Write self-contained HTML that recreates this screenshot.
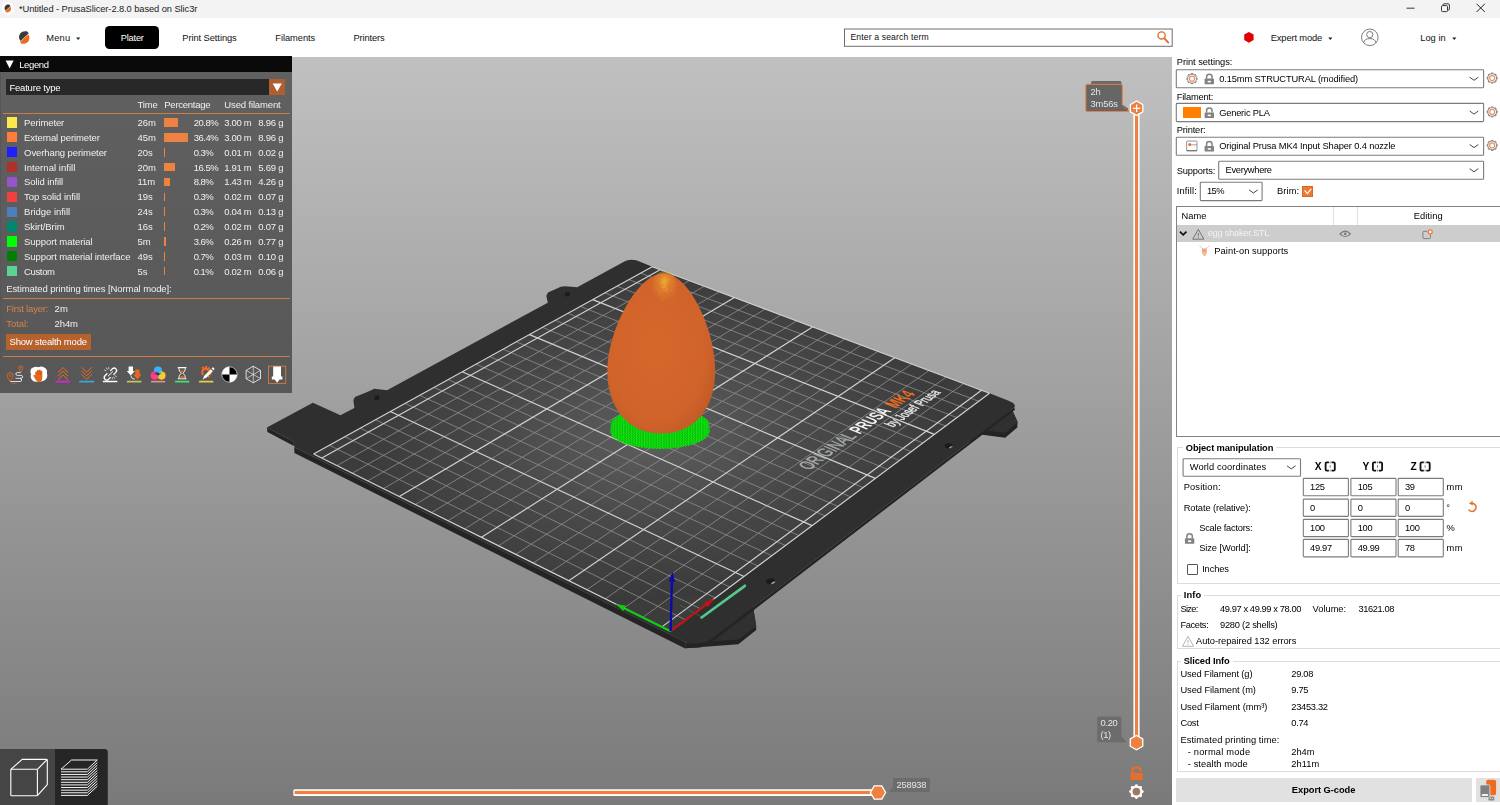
<!DOCTYPE html>
<html><head><meta charset="utf-8"><title>PrusaSlicer</title><style>
html,body{margin:0;padding:0;}
body{width:1500px;height:805px;overflow:hidden;position:relative;background:#fff;font-family:"Liberation Sans",sans-serif;}
.b{position:absolute;box-sizing:border-box;}
.t{position:absolute;white-space:pre;}
svg{position:absolute;left:0;top:0;overflow:visible;}
#legend,#overlay,#scene{position:absolute;left:0;top:0;width:1500px;height:805px;will-change:transform;}
</style></head><body>
<div id="top"><div class="b" style="left:0px;top:0px;width:1500px;height:17.5px;background:#f3f3f3;"></div><div class="b" style="left:0px;top:17.5px;width:1500px;height:39px;background:#fff;"></div><svg width="1500" height="57" viewBox="0 0 1500 57"><circle cx="7.8" cy="8.5" r="6.4" fill="#fff"/><g transform="translate(7.8,8.5) scale(0.62)"><path d="M-4.9,1.6 C-6.2,-3.4 -2.6,-7 2.6,-6.2 L4.6,-4.2 L-3.6,3.4 Z" fill="#3a3a3a"/><path d="M4.9,-1.6 C6.2,3.4 2.6,7 -2.6,6.2 L-4.2,4.6 L4.0,-3.0 Z" fill="#ed6b21"/></g><g transform="translate(24.2,37.5) scale(1.0)"><path d="M-4.9,1.6 C-6.2,-3.4 -2.6,-7 2.6,-6.2 L4.6,-4.2 L-3.6,3.4 Z" fill="#3a3a3a"/><path d="M4.9,-1.6 C6.2,3.4 2.6,7 -2.6,6.2 L-4.2,4.6 L4.0,-3.0 Z" fill="#ed6b21"/></g><path d="M76.10000000000001,37.4 L80.3,37.4 L78.2,39.9 Z" fill="#222"/><path d="M1328.2,37.4 L1332.3999999999999,37.4 L1330.3,39.9 Z" fill="#222"/><path d="M1452.2,37.4 L1456.3999999999999,37.4 L1454.3,39.9 Z" fill="#222"/><path d="M1406.5,8.2 H1414.5" stroke="#222" stroke-width="0.9" fill="none"/><rect x="1441.5" y="5.6" width="6" height="6" rx="1" fill="none" stroke="#222" stroke-width="0.9"/><path d="M1443.2,5.4 V4.6 Q1443.2,3.8 1444,3.8 H1448.2 Q1449.4,3.8 1449.4,5 V9.2 Q1449.4,10 1448.6,10 H1447.8" fill="none" stroke="#222" stroke-width="0.9"/><path d="M1476.6,3.8 L1484.8,12 M1484.8,3.8 L1476.6,12" stroke="#222" stroke-width="1" fill="none"/><rect x="844.5" y="29" width="327.7" height="17.3" fill="#fff" stroke="#6e6e6e" stroke-width="1"/><circle cx="1161.6" cy="35.4" r="3.6" fill="none" stroke="#e0692a" stroke-width="1.3"/><path d="M1164.2,38.2 L1168.3,42.6" stroke="#e0692a" stroke-width="1.8" stroke-linecap="round"/><polygon points="1253.58,40.00 1248.90,42.70 1244.22,40.00 1244.22,34.60 1248.90,31.90 1253.58,34.60" fill="#e00000"/><circle cx="1369.8" cy="37.3" r="8.3" fill="none" stroke="#6e6e6e" stroke-width="0.9"/><circle cx="1369.8" cy="34.6" r="3.1" fill="none" stroke="#6e6e6e" stroke-width="0.9"/><path d="M1363.6,42.8 Q1364.4,38.6 1369.8,38.6 Q1375.2,38.6 1376,42.8" fill="none" stroke="#6e6e6e" stroke-width="0.9"/></svg><div class="b" style="left:105px;top:26px;width:54.3px;height:23.3px;background:#000;border-radius:4.5px;"></div><span class="t" style='left:19.00px;top:3.16px;font-size:9.3px;line-height:12.09px;color:#222;letter-spacing:-0.069px;'>*Untitled - PrusaSlicer-2.8.0 based on Slic3r</span><span class="t" style='left:46.30px;top:32.05px;font-size:9.3px;line-height:12.09px;color:#111;letter-spacing:0.184px;'>Menu</span><span class="t" style='left:120.80px;top:32.05px;font-size:9.3px;line-height:12.09px;color:#fff;letter-spacing:-0.233px;'>Plater</span><span class="t" style='left:182.30px;top:32.05px;font-size:9.3px;line-height:12.09px;color:#111;letter-spacing:-0.064px;'>Print Settings</span><span class="t" style='left:275.30px;top:32.05px;font-size:9.3px;line-height:12.09px;color:#111;letter-spacing:-0.046px;'>Filaments</span><span class="t" style='left:353.50px;top:32.05px;font-size:9.3px;line-height:12.09px;color:#111;letter-spacing:-0.116px;'>Printers</span><span class="t" style='left:850.40px;top:32.38px;font-size:8.649000000000001px;line-height:11.24px;color:#111;letter-spacing:0.139px;'>Enter a search term</span><span class="t" style='left:1270.80px;top:32.05px;font-size:9.3px;line-height:12.09px;color:#111;letter-spacing:-0.138px;'>Expert mode</span><span class="t" style='left:1420.20px;top:32.05px;font-size:9.3px;line-height:12.09px;color:#111;letter-spacing:0.043px;'>Log in</span></div>
<div id="scene"><div class="b" style="left:0px;top:56.5px;width:1171.5px;height:748.5px;background:linear-gradient(#c0c0c0,#7a7a7a);"></div><svg width="1500" height="805" viewBox="0 0 1500 805"><defs><radialGradient id="bedg" cx="0.5" cy="0.5" r="0.5"><stop offset="0" stop-color="#5e5e5e"/><stop offset="0.55" stop-color="#484848"/><stop offset="1" stop-color="#3a3a3a"/></radialGradient><radialGradient id="eggg" cx="0.45" cy="0.45" r="0.65"><stop offset="0" stop-color="#d7682c"/><stop offset="0.72" stop-color="#d0632a"/><stop offset="1" stop-color="#bd5926"/></radialGradient><radialGradient id="eggtop" cx="0.5" cy="0.3" r="0.6"><stop offset="0" stop-color="#f2c030" stop-opacity="0.85"/><stop offset="0.35" stop-color="#eea030" stop-opacity="0.45"/><stop offset="1" stop-color="#e88a30" stop-opacity="0"/></radialGradient><pattern id="supp" width="2.6" height="2.6" patternUnits="userSpaceOnUse"><rect width="2.6" height="2.6" fill="#0ee60e"/><path d="M0.4,2.6 L1.5,0" stroke="#0a9a0a" stroke-width="0.75"/></pattern><clipPath id="gridclip"><polygon points="670.6,631.2 989.5,393.3 652.2,266.7 313.6,454.0"/></clipPath></defs><polygon points="1012,409.5 1017.6,422 1017.3,427.4 1005.2,437.8 980.6,434.4 970,442 966,441 972,432" fill="#232323"/><polygon points="1012,409.5 1017.6,422 1005.2,432.9 981.2,429.8 972,436.5" fill="#303030"/><polygon points="753.1,606.9 756.2,626 756.2,630 738.4,644.3 684.7,648.2 688,640 720,630" fill="#232323"/><polygon points="710.7,638.1 753.1,606.9 756.2,626 739.3,639.2 709.8,641.7" fill="#303030"/><polygon points="266.9,427.6 267.4,432 293.9,446 293.8,441.7" fill="#242424"/><polygon points="294.3,447.2 294.4,453 684.7,648.2 686,642.4" fill="#242424"/><polygon points="686,642.4 684.7,648.2 700,647.4 712,642 1015,409.8 1014.3,407.6 712,638.6 700,643.3" fill="#242424"/><polygon points="631.3,259.8 636,260.2 639.5,261.4 652.2,266.7 989.5,393.3 1008,400.6 1013.2,403 1015,405.4 1014.3,407.6 712,638.6 706.5,641.8 700,643.3 692,643.6 686,642.4 294.3,447.2 293.8,441.7 266.9,427.6 312.9,402.7 340.5,415.3 354.4,407.9 353.4,399.9 355,397 369,391.3 374.3,388.8 387.1,390.2 547.8,302.7 546.3,295.7 548,292.6 560.8,286.7 565,286.3 577.2,287.2 624.4,261.4 627.5,260.2" fill="#2f2f2f"/><rect x="565.0" y="292.2" width="4.6" height="4" fill="#1b1b1b" transform="skewX(-12)" transform-origin="567.2 294.2"/><rect x="374.6" y="395.8" width="4.6" height="4" fill="#1b1b1b" transform="skewX(-12)" transform-origin="376.8 397.8"/><ellipse cx="770.6" cy="581.3" rx="4.70" ry="2.70" fill="#1b1b1b" transform="rotate(-6 770.6 581.3)"/><ellipse cx="773.20" cy="582.75" rx="2.30" ry="0.85" fill="#a0a0a0" transform="rotate(-28 773.20 582.75)"/><ellipse cx="948.6" cy="445.9" rx="4.00" ry="2.29" fill="#1b1b1b" transform="rotate(-6 948.6 445.9)"/><ellipse cx="950.81" cy="447.13" rx="1.95" ry="0.72" fill="#a0a0a0" transform="rotate(-28 950.81 447.13)"/><polygon points="670.6,631.2 989.5,393.3 652.2,266.7 313.6,454.0" fill="#3c3c3c"/><g clip-path="url(#gridclip)"><ellipse cx="655" cy="435" rx="300" ry="165" fill="url(#bedg)" transform="rotate(-4 655 435)"/></g><path d="M685.7,619.9 L329.4,445.3 M700.6,608.8 L344.9,436.7 M715.3,597.8 L360.3,428.2 M729.8,587.0 L375.4,419.8 M758.0,566.0 L405.1,403.4 M771.9,555.7 L419.6,395.3 M785.5,545.5 L434.0,387.4 M798.9,535.5 L448.2,379.6 M825.1,515.9 L476.0,364.2 M838.0,506.4 L489.6,356.6 M850.6,496.9 L503.1,349.2 M863.1,487.6 L516.3,341.8 M887.5,469.4 L542.4,327.4 M899.5,460.5 L555.2,320.3 M911.3,451.7 L567.9,313.3 M922.9,443.0 L580.4,306.4 M945.7,426.0 L604.9,292.9 M956.9,417.6 L616.9,286.2 M967.9,409.4 L628.8,279.6 M978.8,401.3 L640.6,273.1 M642.8,617.4 L963.7,383.6 M624.0,608.1 L946.2,377.1 M605.4,598.8 L928.9,370.5 M587.0,589.7 L911.7,364.1 M550.9,571.8 L877.9,351.4 M533.2,563.0 L861.3,345.2 M515.8,554.3 L844.9,339.0 M498.5,545.8 L828.6,332.9 M464.6,529.0 L796.6,320.9 M448.0,520.7 L780.8,315.0 M431.6,512.6 L765.2,309.1 M415.3,504.5 L749.7,303.3 M383.4,488.7 L719.2,291.9 M367.8,480.9 L704.3,286.2 M352.3,473.2 L689.4,280.7 M337.0,465.6 L674.7,275.1" stroke="#8e8e8e" stroke-width="0.8" fill="none"/><path d="M670.6,631.2 L313.6,454.0 M989.5,393.3 L652.2,266.7 M670.6,631.2 L989.5,393.3 M313.6,454.0 L652.2,266.7 M744.0,576.4 L390.4,411.5 M812.1,525.6 L462.2,371.8 M875.4,478.4 L529.5,334.6 M934.4,434.4 L592.7,299.6 M661.9,626.9 L981.5,390.3 M568.8,580.7 L894.7,357.7 M481.5,537.3 L812.5,326.9 M399.3,496.5 L734.4,297.6 M321.8,458.1 L660.1,269.7" stroke="#d2d2d2" stroke-width="1.15" fill="none"/><path d="M701.6,617.5 L744.9,585.8" stroke="#55c98c" stroke-width="2.7" stroke-linecap="round"/><path d="M701,616.6 L679.8,605" stroke="#3f8a64" stroke-width="0.5"/><text stroke="#a4aaa6" stroke-width="0.3" transform="matrix(1.1996,-0.8569,1.7502,0.7236,809.18,470.56)" x="0" y="0" font-family="Liberation Sans, sans-serif" font-size="10.0" fill="#a4aaa6" textLength="40.1" lengthAdjust="spacingAndGlyphs">ORIGINAL</text><text transform="matrix(1.1427,-0.8162,1.7316,0.6894,859.74,434.45)" x="0" y="0" font-family="Liberation Sans, sans-serif" font-size="10.0" font-weight="bold" fill="#f4f4f4" textLength="28.4" lengthAdjust="spacingAndGlyphs">PRUSA</text><text transform="matrix(1.1036,-0.7883,1.7178,0.6660,895.58,408.85)" x="0" y="0" font-family="Liberation Sans, sans-serif" font-size="10.0" font-weight="bold" fill="#ef6a1e" textLength="18.8" lengthAdjust="spacingAndGlyphs">MK4</text><text stroke="#e6e6e6" stroke-width="0.35" transform="matrix(0.8518,-0.6167,1.3391,0.5210,893.08,427.44)" x="0" y="0" font-family="Liberation Sans, sans-serif" font-size="10.0" fill="#e6e6e6" textLength="56.4" lengthAdjust="spacingAndGlyphs">by Josef Prusa</text><g fill="url(#supp)"><ellipse cx="660" cy="424.5" rx="49.2" ry="16.5"/><rect x="610.8" y="424.5" width="98.4" height="6.5"/><ellipse cx="660" cy="431" rx="49.2" ry="17.4"/></g><ellipse cx="660" cy="431" rx="49.2" ry="17.4" fill="none" stroke="#10d810" stroke-width="1.2" stroke-dasharray="2.2 1.4"/><path d="M663.5,273.3 C689,273.3 715.2,330 715.2,371 C715.2,408 695,433.6 661.2,433.6 C628,433.6 607.3,408 607.3,371 C607.3,330 638,273.3 663.5,273.3 Z" fill="url(#eggg)"/><ellipse cx="664.5" cy="288" rx="13" ry="17" fill="url(#eggtop)"/><rect x="667.3" y="292.0" width="0.9" height="0.9" fill="#f0b030" opacity="0.52"/><rect x="671.4" y="291.3" width="0.9" height="0.9" fill="#f0b030" opacity="0.38"/><rect x="660.0" y="293.8" width="0.9" height="0.9" fill="#f0b030" opacity="0.43"/><rect x="663.1" y="285.9" width="0.9" height="0.9" fill="#f0b030" opacity="0.68"/><rect x="663.5" y="286.7" width="0.9" height="0.9" fill="#f0b030" opacity="0.70"/><rect x="665.9" y="287.4" width="0.9" height="0.9" fill="#f0b030" opacity="0.67"/><rect x="667.2" y="278.1" width="0.9" height="0.9" fill="#f0b030" opacity="0.48"/><rect x="664.9" y="289.7" width="0.9" height="0.9" fill="#f0b030" opacity="0.63"/><rect x="671.6" y="282.2" width="0.9" height="0.9" fill="#f0b030" opacity="0.39"/><rect x="658.9" y="292.7" width="0.9" height="0.9" fill="#f0b030" opacity="0.41"/><rect x="674.3" y="290.6" width="0.9" height="0.9" fill="#f0b030" opacity="0.26"/><rect x="662.2" y="300.2" width="0.9" height="0.9" fill="#f0b030" opacity="0.30"/><rect x="666.5" y="288.8" width="0.9" height="0.9" fill="#f0b030" opacity="0.62"/><rect x="666.3" y="279.5" width="0.9" height="0.9" fill="#f0b030" opacity="0.53"/><rect x="661.8" y="283.6" width="0.9" height="0.9" fill="#f0b030" opacity="0.60"/><rect x="659.2" y="294.5" width="0.9" height="0.9" fill="#f0b030" opacity="0.38"/><rect x="670.8" y="290.1" width="0.9" height="0.9" fill="#f0b030" opacity="0.42"/><rect x="664.9" y="288.2" width="0.9" height="0.9" fill="#f0b030" opacity="0.68"/><rect x="657.4" y="291.5" width="0.9" height="0.9" fill="#f0b030" opacity="0.37"/><rect x="660.5" y="282.3" width="0.9" height="0.9" fill="#f0b030" opacity="0.53"/><rect x="662.7" y="294.9" width="0.9" height="0.9" fill="#f0b030" opacity="0.46"/><rect x="661.0" y="283.3" width="0.9" height="0.9" fill="#f0b030" opacity="0.56"/><rect x="669.2" y="278.7" width="0.9" height="0.9" fill="#f0b030" opacity="0.43"/><rect x="662.5" y="298.7" width="0.9" height="0.9" fill="#f0b030" opacity="0.35"/><rect x="672.1" y="296.8" width="0.9" height="0.9" fill="#f0b030" opacity="0.26"/><rect x="664.8" y="277.2" width="0.9" height="0.9" fill="#f0b030" opacity="0.48"/><rect x="661.7" y="286.3" width="0.9" height="0.9" fill="#f0b030" opacity="0.62"/><rect x="664.0" y="284.5" width="0.9" height="0.9" fill="#f0b030" opacity="0.70"/><rect x="656.8" y="280.0" width="0.9" height="0.9" fill="#f0b030" opacity="0.34"/><rect x="660.8" y="299.6" width="0.9" height="0.9" fill="#f0b030" opacity="0.29"/><rect x="657.8" y="279.0" width="0.9" height="0.9" fill="#f0b030" opacity="0.36"/><rect x="657.7" y="289.0" width="0.9" height="0.9" fill="#f0b030" opacity="0.41"/><rect x="673.2" y="281.1" width="0.9" height="0.9" fill="#f0b030" opacity="0.31"/><rect x="661.3" y="277.7" width="0.9" height="0.9" fill="#f0b030" opacity="0.45"/><rect x="664.1" y="283.8" width="0.9" height="0.9" fill="#f0b030" opacity="0.68"/><rect x="672.2" y="285.5" width="0.9" height="0.9" fill="#f0b030" opacity="0.38"/><rect x="662.5" y="299.8" width="0.9" height="0.9" fill="#f0b030" opacity="0.31"/><rect x="661.9" y="278.7" width="0.9" height="0.9" fill="#f0b030" opacity="0.49"/><rect x="663.8" y="286.3" width="0.9" height="0.9" fill="#f0b030" opacity="0.71"/><rect x="666.7" y="289.1" width="0.9" height="0.9" fill="#f0b030" opacity="0.61"/><rect x="664.7" y="283.8" width="0.9" height="0.9" fill="#f0b030" opacity="0.68"/><rect x="664.5" y="289.9" width="0.9" height="0.9" fill="#f0b030" opacity="0.63"/><rect x="668.2" y="279.9" width="0.9" height="0.9" fill="#f0b030" opacity="0.49"/><rect x="662.8" y="286.9" width="0.9" height="0.9" fill="#f0b030" opacity="0.66"/><rect x="669.6" y="278.9" width="0.9" height="0.9" fill="#f0b030" opacity="0.42"/><rect x="660.8" y="289.4" width="0.9" height="0.9" fill="#f0b030" opacity="0.55"/><rect x="668.3" y="280.7" width="0.9" height="0.9" fill="#f0b030" opacity="0.51"/><rect x="670.4" y="298.8" width="0.9" height="0.9" fill="#f0b030" opacity="0.26"/><rect x="664.8" y="290.8" width="0.9" height="0.9" fill="#f0b030" opacity="0.60"/><rect x="660.8" y="286.6" width="0.9" height="0.9" fill="#f0b030" opacity="0.57"/><rect x="663.9" y="297.2" width="0.9" height="0.9" fill="#f0b030" opacity="0.40"/><rect x="664.3" y="286.2" width="0.9" height="0.9" fill="#f0b030" opacity="0.74"/><rect x="659.8" y="282.7" width="0.9" height="0.9" fill="#f0b030" opacity="0.50"/><rect x="659.7" y="279.1" width="0.9" height="0.9" fill="#f0b030" opacity="0.44"/><rect x="672.0" y="290.1" width="0.9" height="0.9" fill="#f0b030" opacity="0.37"/><rect x="660.1" y="291.0" width="0.9" height="0.9" fill="#f0b030" opacity="0.49"/><rect x="663.1" y="283.5" width="0.9" height="0.9" fill="#f0b030" opacity="0.65"/><rect x="665.9" y="287.0" width="0.9" height="0.9" fill="#f0b030" opacity="0.68"/><rect x="666.3" y="290.6" width="0.9" height="0.9" fill="#f0b030" opacity="0.58"/><rect x="669.1" y="288.5" width="0.9" height="0.9" fill="#f0b030" opacity="0.52"/><rect x="664.5" y="286.0" width="0.9" height="0.9" fill="#f0b030" opacity="0.75"/><rect x="663.1" y="288.5" width="0.9" height="0.9" fill="#f0b030" opacity="0.65"/><rect x="665.1" y="285.1" width="0.9" height="0.9" fill="#f0b030" opacity="0.71"/><rect x="668.9" y="295.3" width="0.9" height="0.9" fill="#f0b030" opacity="0.39"/><rect x="662.2" y="291.1" width="0.9" height="0.9" fill="#f0b030" opacity="0.56"/><path d="M670.6,631.2 L706.3,604.6" stroke="#c41010" stroke-width="2.2"/><polygon points="714.5,598.4 708.0,606.9 704.6,602.3" fill="#c41010"/><path d="M670.6,631.2 L624.6,608.4" stroke="#10cc10" stroke-width="2.2"/><polygon points="615.3,603.8 625.9,605.8 623.3,611.0" fill="#10cc10"/><path d="M670.6,631.2 L671.9,581.8" stroke="#0a0aa8" stroke-width="2.4"/><polygon points="672.5,571.7 675.0,582.0 668.8,581.6" fill="#0a0aa8"/></svg></div>
<div id="overlay"><svg width="1500" height="805" viewBox="0 0 1500 805"><rect x="1133.4" y="108" width="6.2" height="635" fill="#fff"/><rect x="1135" y="108" width="3.1" height="635" fill="#ee8040"/><polygon points="1142.84,111.80 1136.60,115.40 1130.36,111.80 1130.36,104.60 1136.60,101.00 1142.84,104.60" fill="#ee8040" stroke="#fff" stroke-width="1.3"/><path d="M1132.9,108.3 H1140.3 M1136.6,104.5 V112" stroke="#fff" stroke-width="1.3" fill="none"/><polygon points="1142.74,746.20 1136.50,749.80 1130.26,746.20 1130.26,739.00 1136.50,735.40 1142.74,739.00" fill="#ee8040" stroke="#fff" stroke-width="1.3"/><rect x="293.3" y="789.2" width="585" height="6.8" rx="1.5" fill="#fff"/><rect x="294.6" y="790.9" width="583" height="3.2" fill="#ee8040"/><polygon points="885.60,792.50 881.80,799.08 874.20,799.08 870.40,792.50 874.20,785.92 881.80,785.92" fill="#ee8040" stroke="#fff" stroke-width="1.3"/><rect x="1091" y="81" width="30.5" height="6" rx="1.5" fill="#6a6a6a"/><path d="M1087.3,84.3 H1120.8 Q1122.3,84.3 1122.3,85.8 V104.5 L1128.8,111.6 H1087.3 Q1085.8,111.6 1085.8,110.1 V85.8 Q1085.8,84.3 1087.3,84.3 Z" fill="#666" stroke="#ee8040" stroke-width="1"/><path d="M1122.8,104.8 L1127.8,108.4 L1128.4,111 Z" fill="#555"/><path d="M1098.6,716.4 H1120 Q1121.4,716.4 1121.4,717.8 V736.6 L1126.4,741.8 V742.2 H1098.6 Q1097.2,742.2 1097.2,740.8 V717.8 Q1097.2,716.4 1098.6,716.4 Z" fill="#6c6c6c"/><path d="M894.5,778 H928.6 Q930,778 930,779.4 V790.6 Q930,792 928.6,792 H889 L893,787.6 V779.4 Q893,778 894.5,778 Z" fill="#6c6c6c"/><path d="M1132.6,773.4 V770 Q1132.6,767.4 1136.5,767.4 Q1140.5,767.4 1140.5,770 V770.8" fill="none" stroke="#ee6b20" stroke-width="2.3" stroke-linecap="round"/><rect x="1130.5" y="772.9" width="12.1" height="7" rx="0.9" fill="#ee6b20"/><polygon points="1135.2,774.8 1135.2,778 1138.6,776.4" fill="#8a8a8a"/><circle cx="1142.30" cy="791.60" r="1.45" fill="#fff"/><circle cx="1140.57" cy="795.77" r="1.45" fill="#fff"/><circle cx="1136.40" cy="797.50" r="1.45" fill="#fff"/><circle cx="1132.23" cy="795.77" r="1.45" fill="#fff"/><circle cx="1130.50" cy="791.60" r="1.45" fill="#fff"/><circle cx="1132.23" cy="787.43" r="1.45" fill="#fff"/><circle cx="1136.40" cy="785.70" r="1.45" fill="#fff"/><circle cx="1140.57" cy="787.43" r="1.45" fill="#fff"/><circle cx="1136.4" cy="791.6" r="6.1" fill="#fff"/><circle cx="1136.4" cy="791.6" r="3.9" fill="#e8702a"/><circle cx="1136.4" cy="791.6" r="3.1" fill="#808080"/><path d="M0,749 H104.5 Q107.8,749 107.8,752.3 V805 H0 Z" fill="#262626"/><rect x="0" y="749" width="55" height="56" fill="#454545"/><g fill="none" stroke="#fff" stroke-width="1.1" stroke-linejoin="round"><rect x="10.8" y="769.3" width="26.6" height="26.4" rx="0.8"/><path d="M10.8,769.3 L22.2,759.4 H46.4 Q47.3,759.4 47.3,760.3 V784.6 L37.4,795.7 M37.4,769.3 L47.1,759.6"/></g><g fill="none" stroke="#fff" stroke-width="0.95" stroke-linejoin="round"><path d="M61,769.2 L71.5,760 H97.3 L87.4,769.2 Z"/><path d="M61,771.82 H87.4 L97.3,762.62"/><path d="M61,774.44 H87.4 L97.3,765.24"/><path d="M61,777.06 H87.4 L97.3,767.86"/><path d="M61,779.68 H87.4 L97.3,770.48"/><path d="M61,782.30 H87.4 L97.3,773.10"/><path d="M61,784.92 H87.4 L97.3,775.72"/><path d="M61,787.54 H87.4 L97.3,778.34"/><path d="M61,790.16 H87.4 L97.3,780.96"/><path d="M61,792.78 H87.4 L97.3,783.58"/><path d="M61,795.40 H87.4 L97.3,786.20"/></g></svg><span class="t" style='left:1090.60px;top:86.06px;font-size:9.3px;line-height:12.09px;color:#e6e6e6;letter-spacing:-0.272px;'>2h</span><span class="t" style='left:1090.60px;top:97.66px;font-size:9.3px;line-height:12.09px;color:#e6e6e6;letter-spacing:-0.181px;'>3m56s</span><span class="t" style='left:1100.50px;top:717.46px;font-size:9.3px;line-height:12.09px;color:#e6e6e6;letter-spacing:-0.277px;'>0.20</span><span class="t" style='left:1100.50px;top:729.26px;font-size:9.3px;line-height:12.09px;color:#e6e6e6;letter-spacing:-0.358px;'>(1)</span><span class="t" style='left:896.60px;top:778.66px;font-size:9.3px;line-height:12.09px;color:#e6e6e6;letter-spacing:-0.239px;'>258938</span></div>
<div id="legend"><div class="b" style="left:0px;top:56.3px;width:292px;height:337px;background:linear-gradient(#616161,#575757);"></div><div class="b" style="left:0px;top:56.3px;width:292px;height:16.2px;background:#0a0a0a;"></div><div class="b" style="left:0px;top:72.5px;width:1px;height:320.8px;background:#55555b;"></div><span class="t" style='left:19.20px;top:58.83px;font-size:9.5px;line-height:12.35px;color:#fff;letter-spacing:-0.367px;'>Legend</span><div class="b" style="left:6px;top:79.3px;width:279.2px;height:15.7px;background:#282828;"></div><div class="b" style="left:269px;top:79.3px;width:16.2px;height:15.7px;background:#ae5f2f;"></div><span class="t" style='left:9.40px;top:81.62px;font-size:9.5px;line-height:12.35px;color:#fff;letter-spacing:-0.195px;'>Feature type</span><span class="t" style='left:137.50px;top:98.53px;font-size:9.5px;line-height:12.35px;color:#f0f0f0;letter-spacing:-0.191px;'>Time</span><span class="t" style='left:164.30px;top:98.53px;font-size:9.5px;line-height:12.35px;color:#f0f0f0;letter-spacing:-0.259px;'>Percentage</span><span class="t" style='left:224.30px;top:98.53px;font-size:9.5px;line-height:12.35px;color:#f0f0f0;letter-spacing:-0.138px;'>Used filament</span><div class="b" style="left:3px;top:113.4px;width:286.5px;height:1px;background:#cf7c44;"></div><div class="b" style="left:7.3px;top:117.39999999999999px;width:10.2px;height:10.2px;background:#ffe84d;"></div><span class="t" style='left:24.10px;top:116.92px;font-size:9.5px;line-height:12.35px;color:#f0f0f0;letter-spacing:-0.132px;'>Perimeter</span><span class="t" style='left:137.50px;top:116.92px;font-size:9.5px;line-height:12.35px;color:#f0f0f0;'>26m</span><div class="b" style="left:164px;top:118.3px;width:13.6px;height:8.5px;background:#ee8241;"></div><span class="t" style='left:193.80px;top:116.92px;font-size:9.5px;line-height:12.35px;color:#f0f0f0;letter-spacing:-0.527px;'>20.8%</span><span class="t" style='left:224.30px;top:116.92px;font-size:9.5px;line-height:12.35px;color:#f0f0f0;letter-spacing:-0.341px;'>3.00 m</span><span class="t" style='left:258.20px;top:116.92px;font-size:9.5px;line-height:12.35px;color:#f0f0f0;letter-spacing:-0.237px;'>8.96 g</span><div class="b" style="left:7.3px;top:132.26500000000001px;width:10.2px;height:10.2px;background:#ff7d38;"></div><span class="t" style='left:24.10px;top:131.79px;font-size:9.5px;line-height:12.35px;color:#f0f0f0;letter-spacing:-0.107px;'>External perimeter</span><span class="t" style='left:137.50px;top:131.79px;font-size:9.5px;line-height:12.35px;color:#f0f0f0;'>45m</span><div class="b" style="left:164px;top:133.165px;width:23.8px;height:8.5px;background:#ee8241;"></div><span class="t" style='left:193.80px;top:131.79px;font-size:9.5px;line-height:12.35px;color:#f0f0f0;letter-spacing:-0.527px;'>36.4%</span><span class="t" style='left:224.30px;top:131.79px;font-size:9.5px;line-height:12.35px;color:#f0f0f0;letter-spacing:-0.341px;'>3.00 m</span><span class="t" style='left:258.20px;top:131.79px;font-size:9.5px;line-height:12.35px;color:#f0f0f0;letter-spacing:-0.237px;'>8.96 g</span><div class="b" style="left:7.3px;top:147.13px;width:10.2px;height:10.2px;background:#1f1fff;"></div><span class="t" style='left:24.10px;top:146.65px;font-size:9.5px;line-height:12.35px;color:#f0f0f0;letter-spacing:-0.094px;'>Overhang perimeter</span><span class="t" style='left:137.50px;top:146.65px;font-size:9.5px;line-height:12.35px;color:#f0f0f0;'>20s</span><div class="b" style="left:164px;top:148.02999999999997px;width:0.9px;height:8.5px;background:#ee8241;"></div><span class="t" style='left:193.80px;top:146.65px;font-size:9.5px;line-height:12.35px;color:#f0f0f0;letter-spacing:-0.589px;'>0.3%</span><span class="t" style='left:224.30px;top:146.65px;font-size:9.5px;line-height:12.35px;color:#f0f0f0;letter-spacing:-0.341px;'>0.01 m</span><span class="t" style='left:258.20px;top:146.65px;font-size:9.5px;line-height:12.35px;color:#f0f0f0;letter-spacing:-0.237px;'>0.02 g</span><div class="b" style="left:7.3px;top:161.995px;width:10.2px;height:10.2px;background:#b03029;"></div><span class="t" style='left:24.10px;top:161.52px;font-size:9.5px;line-height:12.35px;color:#f0f0f0;letter-spacing:0.040px;'>Internal infill</span><span class="t" style='left:137.50px;top:161.52px;font-size:9.5px;line-height:12.35px;color:#f0f0f0;'>20m</span><div class="b" style="left:164px;top:162.89499999999998px;width:10.8px;height:8.5px;background:#ee8241;"></div><span class="t" style='left:193.80px;top:161.52px;font-size:9.5px;line-height:12.35px;color:#f0f0f0;letter-spacing:-0.527px;'>16.5%</span><span class="t" style='left:224.30px;top:161.52px;font-size:9.5px;line-height:12.35px;color:#f0f0f0;letter-spacing:-0.341px;'>1.91 m</span><span class="t" style='left:258.20px;top:161.52px;font-size:9.5px;line-height:12.35px;color:#f0f0f0;letter-spacing:-0.237px;'>5.69 g</span><div class="b" style="left:7.3px;top:176.86px;width:10.2px;height:10.2px;background:#9654cc;"></div><span class="t" style='left:24.10px;top:176.38px;font-size:9.5px;line-height:12.35px;color:#f0f0f0;letter-spacing:-0.095px;'>Solid infill</span><span class="t" style='left:137.50px;top:176.38px;font-size:9.5px;line-height:12.35px;color:#f0f0f0;'>11m</span><div class="b" style="left:164px;top:177.76px;width:5.8px;height:8.5px;background:#ee8241;"></div><span class="t" style='left:193.80px;top:176.38px;font-size:9.5px;line-height:12.35px;color:#f0f0f0;letter-spacing:-0.589px;'>8.8%</span><span class="t" style='left:224.30px;top:176.38px;font-size:9.5px;line-height:12.35px;color:#f0f0f0;letter-spacing:-0.341px;'>1.43 m</span><span class="t" style='left:258.20px;top:176.38px;font-size:9.5px;line-height:12.35px;color:#f0f0f0;letter-spacing:-0.237px;'>4.26 g</span><div class="b" style="left:7.3px;top:191.72500000000002px;width:10.2px;height:10.2px;background:#f04040;"></div><span class="t" style='left:24.10px;top:191.25px;font-size:9.5px;line-height:12.35px;color:#f0f0f0;letter-spacing:-0.031px;'>Top solid infill</span><span class="t" style='left:137.50px;top:191.25px;font-size:9.5px;line-height:12.35px;color:#f0f0f0;'>19s</span><div class="b" style="left:164px;top:192.625px;width:0.9px;height:8.5px;background:#ee8241;"></div><span class="t" style='left:193.80px;top:191.25px;font-size:9.5px;line-height:12.35px;color:#f0f0f0;letter-spacing:-0.589px;'>0.3%</span><span class="t" style='left:224.30px;top:191.25px;font-size:9.5px;line-height:12.35px;color:#f0f0f0;letter-spacing:-0.341px;'>0.02 m</span><span class="t" style='left:258.20px;top:191.25px;font-size:9.5px;line-height:12.35px;color:#f0f0f0;letter-spacing:-0.237px;'>0.07 g</span><div class="b" style="left:7.3px;top:206.59px;width:10.2px;height:10.2px;background:#4d80ba;"></div><span class="t" style='left:24.10px;top:206.11px;font-size:9.5px;line-height:12.35px;color:#f0f0f0;letter-spacing:-0.036px;'>Bridge infill</span><span class="t" style='left:137.50px;top:206.11px;font-size:9.5px;line-height:12.35px;color:#f0f0f0;'>24s</span><div class="b" style="left:164px;top:207.48999999999998px;width:0.9px;height:8.5px;background:#ee8241;"></div><span class="t" style='left:193.80px;top:206.11px;font-size:9.5px;line-height:12.35px;color:#f0f0f0;letter-spacing:-0.589px;'>0.3%</span><span class="t" style='left:224.30px;top:206.11px;font-size:9.5px;line-height:12.35px;color:#f0f0f0;letter-spacing:-0.341px;'>0.04 m</span><span class="t" style='left:258.20px;top:206.11px;font-size:9.5px;line-height:12.35px;color:#f0f0f0;letter-spacing:-0.237px;'>0.13 g</span><div class="b" style="left:7.3px;top:221.455px;width:10.2px;height:10.2px;background:#00876e;"></div><span class="t" style='left:24.10px;top:220.98px;font-size:9.5px;line-height:12.35px;color:#f0f0f0;letter-spacing:-0.067px;'>Skirt/Brim</span><span class="t" style='left:137.50px;top:220.98px;font-size:9.5px;line-height:12.35px;color:#f0f0f0;'>16s</span><div class="b" style="left:164px;top:222.355px;width:0.9px;height:8.5px;background:#ee8241;"></div><span class="t" style='left:193.80px;top:220.98px;font-size:9.5px;line-height:12.35px;color:#f0f0f0;letter-spacing:-0.589px;'>0.2%</span><span class="t" style='left:224.30px;top:220.98px;font-size:9.5px;line-height:12.35px;color:#f0f0f0;letter-spacing:-0.341px;'>0.02 m</span><span class="t" style='left:258.20px;top:220.98px;font-size:9.5px;line-height:12.35px;color:#f0f0f0;letter-spacing:-0.237px;'>0.07 g</span><div class="b" style="left:7.3px;top:236.32px;width:10.2px;height:10.2px;background:#00ff00;"></div><span class="t" style='left:24.10px;top:235.84px;font-size:9.5px;line-height:12.35px;color:#f0f0f0;letter-spacing:-0.081px;'>Support material</span><span class="t" style='left:137.50px;top:235.84px;font-size:9.5px;line-height:12.35px;color:#f0f0f0;'>5m</span><div class="b" style="left:164px;top:237.21999999999997px;width:2.4px;height:8.5px;background:#ee8241;"></div><span class="t" style='left:193.80px;top:235.84px;font-size:9.5px;line-height:12.35px;color:#f0f0f0;letter-spacing:-0.589px;'>3.6%</span><span class="t" style='left:224.30px;top:235.84px;font-size:9.5px;line-height:12.35px;color:#f0f0f0;letter-spacing:-0.341px;'>0.26 m</span><span class="t" style='left:258.20px;top:235.84px;font-size:9.5px;line-height:12.35px;color:#f0f0f0;letter-spacing:-0.237px;'>0.77 g</span><div class="b" style="left:7.3px;top:251.185px;width:10.2px;height:10.2px;background:#008000;"></div><span class="t" style='left:24.10px;top:250.71px;font-size:9.5px;line-height:12.35px;color:#f0f0f0;letter-spacing:-0.095px;'>Support material interface</span><span class="t" style='left:137.50px;top:250.71px;font-size:9.5px;line-height:12.35px;color:#f0f0f0;'>49s</span><div class="b" style="left:164px;top:252.08499999999998px;width:0.9px;height:8.5px;background:#ee8241;"></div><span class="t" style='left:193.80px;top:250.71px;font-size:9.5px;line-height:12.35px;color:#f0f0f0;letter-spacing:-0.589px;'>0.7%</span><span class="t" style='left:224.30px;top:250.71px;font-size:9.5px;line-height:12.35px;color:#f0f0f0;letter-spacing:-0.341px;'>0.03 m</span><span class="t" style='left:258.20px;top:250.71px;font-size:9.5px;line-height:12.35px;color:#f0f0f0;letter-spacing:-0.237px;'>0.10 g</span><div class="b" style="left:7.3px;top:266.05px;width:10.2px;height:10.2px;background:#5ed194;"></div><span class="t" style='left:24.10px;top:265.57px;font-size:9.5px;line-height:12.35px;color:#f0f0f0;letter-spacing:-0.372px;'>Custom</span><span class="t" style='left:137.50px;top:265.57px;font-size:9.5px;line-height:12.35px;color:#f0f0f0;'>5s</span><div class="b" style="left:164px;top:266.95px;width:0.9px;height:8.5px;background:#ee8241;"></div><span class="t" style='left:193.80px;top:265.57px;font-size:9.5px;line-height:12.35px;color:#f0f0f0;letter-spacing:-0.589px;'>0.1%</span><span class="t" style='left:224.30px;top:265.57px;font-size:9.5px;line-height:12.35px;color:#f0f0f0;letter-spacing:-0.341px;'>0.02 m</span><span class="t" style='left:258.20px;top:265.57px;font-size:9.5px;line-height:12.35px;color:#f0f0f0;letter-spacing:-0.237px;'>0.06 g</span><span class="t" style='left:6.20px;top:283.22px;font-size:9.5px;line-height:12.35px;color:#f0f0f0;letter-spacing:-0.089px;'>Estimated printing times [Normal mode]:</span><div class="b" style="left:3px;top:298.1px;width:286.5px;height:1px;background:#cf7c44;"></div><span class="t" style='left:6.20px;top:303.12px;font-size:9.5px;line-height:12.35px;color:#d98247;letter-spacing:-0.195px;'>First layer:</span><span class="t" style='left:54.60px;top:303.12px;font-size:9.5px;line-height:12.35px;color:#f0f0f0;'>2m</span><span class="t" style='left:6.20px;top:317.72px;font-size:9.5px;line-height:12.35px;color:#d98247;letter-spacing:-0.036px;'>Total:</span><span class="t" style='left:54.60px;top:317.72px;font-size:9.5px;line-height:12.35px;color:#f0f0f0;letter-spacing:-0.116px;'>2h4m</span><div class="b" style="left:6.2px;top:334.1px;width:84.4px;height:15.6px;background:#b5622f;"></div><span class="t" style='left:9.50px;top:336.32px;font-size:9.5px;line-height:12.35px;color:#fff;letter-spacing:-0.206px;'>Show stealth mode</span><div class="b" style="left:3px;top:356px;width:286.5px;height:1px;background:#cf7c44;"></div><svg width="1500" height="805" viewBox="0 0 1500 805"><polygon points="5.6,60.6 13.6,60.6 9.6,68.4" fill="#fff"/><polygon points="272.6,83.6 281.8,83.6 277.2,91.4" fill="#fff"/><path d="M10.2,381.69 C8.75,379.08000000000004 7.299999999999999,377.34000000000003 7.299999999999999,375.6 A2.9,2.9 0 1 1 13.1,375.6 C13.1,377.34000000000003 11.649999999999999,379.08000000000004 10.2,381.69 Z" fill="none" stroke="#ee6b20" stroke-width="0.8"/><circle cx="10.2" cy="375.6" r="1.015" fill="none" stroke="#ee6b20" stroke-width="0.6"/><path d="M20.8,372.21000000000004 C19.75,370.32 18.7,369.06 18.7,367.8 A2.1,2.1 0 1 1 22.900000000000002,367.8 C22.900000000000002,369.06 21.85,370.32 20.8,372.21000000000004 Z" fill="none" stroke="#ee6b20" stroke-width="0.8"/><circle cx="20.8" cy="367.8" r="0.735" fill="none" stroke="#ee6b20" stroke-width="0.6"/><path d="M20.8,372.6 H17.4 Q15.8,372.6 15.8,374 Q15.8,375.4 17.4,375.4 H21 Q22.6,375.4 22.6,376.9 Q22.6,378.3 21,378.3 H15.5 M10.4,381.5 H20 Q21.7,381.5 21.7,380 Q21.7,378.6 20,378.4" fill="none" stroke="#fff" stroke-width="0.8"/><path d="M11.5,383.2 H16.5" stroke="#c87848" stroke-width="0.6"/><path d="M31.6,368.2 Q35,365.8 38.6,367.2 Q41.5,365.6 44.2,367.6 Q47.8,369.4 46.9,373.2 Q48.2,376.8 45.6,379.4 Q42.6,382.4 38.8,381.2 Q35,382.6 32.2,380.2 Q29.8,377.4 31,374.2 Q29.6,370.6 31.6,368.2 Z" fill="#fff"/><path d="M35.3,372.2 Q35.3,371.2 36.2,371.2 Q37,371.2 37,372.2 V370.8 Q37,369.8 37.9,369.8 Q38.8,369.8 38.8,370.8 V370.4 Q38.8,369.5 39.7,369.5 Q40.6,369.5 40.6,370.5 V371.2 Q40.6,370.4 41.4,370.4 Q42.3,370.4 42.3,371.4 V377.5 Q42.3,382 38.9,382 Q36.6,382 35.5,379.6 L33.6,376.2 Q33.2,375.2 34,374.8 Q34.8,374.5 35.3,375.4 Z" fill="#e8661c"/><path d="M37,372 V375 M38.8,371 V375 M40.6,371.4 V375" stroke="#b84c10" stroke-width="0.5" fill="none"/><path d="M57.9,372.6 L63,367.6 L68.1,372.6" fill="none" stroke="#ee6b20" stroke-width="1"/><path d="M57.9,376.20000000000005 L63,371.20000000000005 L68.1,376.20000000000005" fill="none" stroke="#ee6b20" stroke-width="1"/><path d="M57.9,379.8 L63,374.8 L68.1,379.8" fill="none" stroke="#ee6b20" stroke-width="1"/><path d="M56.2,381.7 H69.4" stroke="#e020e0" stroke-width="1.7" stroke-linecap="round"/><path d="M81.5,367.2 L86.7,372.2 L91.9,367.2" fill="none" stroke="#ee6b20" stroke-width="1"/><path d="M81.5,370.8 L86.7,375.8 L91.9,370.8" fill="none" stroke="#ee6b20" stroke-width="1"/><path d="M81.5,374.4 L86.7,379.4 L91.9,374.4" fill="none" stroke="#ee6b20" stroke-width="1"/><path d="M80,381.7 H93.4" stroke="#38a8dc" stroke-width="1.7" stroke-linecap="round"/><g fill="none" stroke="#fff" stroke-width="1.3" stroke-linecap="round"><path d="M110.6,370.6 L112.4,368.8 Q114.2,367.2 115.9,368.9 Q117.5,370.6 115.8,372.4 L113.8,374.4"/><path d="M110.2,377.6 L108.4,379.4 Q106.6,381 104.9,379.3 Q103.3,377.6 105,375.8 L107,373.8"/><path d="M108.3,376 L112.6,371.8" stroke-width="1"/></g><g stroke="#fff" stroke-width="0.7"><path d="M106.2,367.6 L107.4,369.6 M104.2,369.8 L106.2,370.9 M108.6,367.2 L108.9,369.2 M114.6,378.6 L113.6,376.8 M116.6,376.6 L114.7,375.6 M112.4,379.2 L112.2,377.4"/></g><path d="M103.6,381.5 H116.6" stroke="#fff" stroke-width="1.7" stroke-linecap="round"/><path d="M128.6,366.6 H133 V371 H134.8 L130.8,375.6 L126.8,371 H128.6 Z" fill="#fff"/><path d="M135.2,369.4 H139.6 V374.4 H141.6 L137.4,379.6 L133.2,374.4 H135.2 Z" fill="#e8661c"/><path d="M130.8,375.6 Q131.2,379.2 134.8,379.2" fill="none" stroke="#fff" stroke-width="0.8"/><path d="M127.6,381.7 H140.6" stroke="#c8c060" stroke-width="1.7" stroke-linecap="round"/><circle cx="158" cy="370.6" r="4.1" fill="#38b4ff"/><circle cx="154.7" cy="375.6" r="4.1" fill="#ff3c84"/><circle cx="161.5" cy="375.6" r="4.1" fill="#ffc83c"/><path d="M158,374.7 L156.4,372.6 Q158,371.8 159.6,372.6 Z" fill="#1a4a9a"/><path d="M158,372 Q160.4,371.8 161.8,373.2 Q160.6,374.6 158.4,375 Z" fill="#58b848"/><path d="M158,372 Q155.6,371.8 154.2,373.2 Q155.4,374.6 157.6,375 Z" fill="#6a3aa8"/><path d="M158.1,375 Q159.4,376.4 158.1,379.2 Q156.8,376.4 158.1,375 Z" fill="#e8642c"/><circle cx="158.1" cy="374.2" r="1.3" fill="#203060"/><path d="M151.8,381.7 H164.4" stroke="#dc9088" stroke-width="1.7" stroke-linecap="round"/><path d="M177.8,367.6 H186.4 M177.8,378.8 H186.4" stroke="#fff" stroke-width="1.1"/><path d="M178.8,368 Q178.8,371.6 181.4,373.2 Q178.8,374.8 178.8,378.4 M185.4,368 Q185.4,371.6 182.8,373.2 Q185.4,374.8 185.4,378.4" fill="none" stroke="#fff" stroke-width="0.9"/><path d="M180,370.4 H184.2 Q183.4,372 182.1,372.6 Q180.8,372 180,370.4 Z M179.8,378.2 Q180.6,376 182.1,375.8 Q183.6,376 184.4,378.2 Z" fill="#d86a2c"/><path d="M175.8,381.7 H188.6" stroke="#48e070" stroke-width="1.7" stroke-linecap="round"/><rect x="204.5" y="366.0" width="2.2" height="2.6" fill="#ee6b20" transform="rotate(-30 205.6 372.2)"/><rect x="204.5" y="366.0" width="2.2" height="2.6" fill="#ee6b20" transform="rotate(5 205.6 372.2)"/><rect x="204.5" y="366.0" width="2.2" height="2.6" fill="#ee6b20" transform="rotate(40 205.6 372.2)"/><rect x="204.5" y="366.0" width="2.2" height="2.6" fill="#ee6b20" transform="rotate(75 205.6 372.2)"/><rect x="204.5" y="366.0" width="2.2" height="2.6" fill="#ee6b20" transform="rotate(110 205.6 372.2)"/><rect x="204.5" y="366.0" width="2.2" height="2.6" fill="#ee6b20" transform="rotate(145 205.6 372.2)"/><path d="M202.4,375.59999999999997 A4.6,4.6 0 1 1 210.0,370.8 L207.7,371.4 A2.3,2.3 0 1 0 204.0,373.9 Z" fill="#ee6b20"/><path d="M203.2,378.8 L204,376 L210.8,369.2 L212.8,371.2 L206,378 Z" fill="#fff"/><path d="M211.6,368.4 L212.4,367.6 Q213,367.1 213.6,367.7 L214.3,368.4 Q214.8,369 214.2,369.6 L213.5,370.3 Z" fill="#fff"/><path d="M202.6,379.6 L203.1,377.9 L204.2,379 Z" fill="#fff"/><path d="M199.8,381.7 H212.6" stroke="#e8d040" stroke-width="1.7" stroke-linecap="round"/><circle cx="229.5" cy="374.5" r="7.7" fill="#000" stroke="#fff" stroke-width="0.6"/><path d="M229.5,374.5 V366.8 A7.7,7.7 0 0 0 221.8,374.5 Z M229.5,374.5 V382.2 A7.7,7.7 0 0 0 237.2,374.5 Z" fill="#fff"/><polygon points="253.3,366.2 260.5,370.4 260.5,378.6 253.3,382.8 246.1,378.6 246.1,370.4" fill="none" stroke="#fff" stroke-width="0.8"/><path d="M253.3,374.5 L253.3,366.2 M253.3,374.5 L260.5,370.4 M253.3,374.5 L260.5,378.6 M253.3,374.5 L253.3,382.8 M253.3,374.5 L246.1,378.6 M253.3,374.5 L246.1,370.4" fill="none" stroke="#fff" stroke-width="0.6"/><rect x="268.5" y="366.2" width="17.2" height="17.2" fill="none" stroke="#cc7a44" stroke-width="1"/><path d="M273.2,366.6 H281 V376.6 H282.4 V379.4 H279.6 L277.1,382.8 L274.6,379.4 H271.8 V376.6 H273.2 Z" fill="#fff"/></svg></div>
<div id="right"><div class="b" style="left:1171.5px;top:56.5px;width:328.5px;height:748.5px;background:#fff;"></div><svg width="1500" height="805" viewBox="0 0 1500 805"><rect x="1176.30" y="69.80" width="307.30" height="17.90" rx="0.8" fill="#fff" stroke="#7c7c7c" stroke-width="1.1"/><rect x="1176.30" y="103.40" width="307.30" height="18.20" rx="0.8" fill="#fff" stroke="#7c7c7c" stroke-width="1.1"/><rect x="1176.30" y="137.20" width="307.30" height="18.10" rx="0.8" fill="#fff" stroke="#7c7c7c" stroke-width="1.1"/><rect x="1218.70" y="161.30" width="264.90" height="17.90" rx="0.8" fill="#fff" stroke="#7c7c7c" stroke-width="1.1"/><rect x="1200.30" y="182.20" width="61.80" height="18.40" rx="0.8" fill="#fff" stroke="#7c7c7c" stroke-width="1.1"/><rect x="1183.10" y="458.80" width="117.40" height="17.50" rx="0.8" fill="#fff" stroke="#7c7c7c" stroke-width="1.1"/><rect x="1303.30" y="478.40" width="45.10" height="17.40" rx="0.8" fill="#fff" stroke="#7c7c7c" stroke-width="1.1"/><rect x="1350.90" y="478.40" width="45.10" height="17.40" rx="0.8" fill="#fff" stroke="#7c7c7c" stroke-width="1.1"/><rect x="1398.20" y="478.40" width="45.10" height="17.40" rx="0.8" fill="#fff" stroke="#7c7c7c" stroke-width="1.1"/><rect x="1303.30" y="499.10" width="45.10" height="17.30" rx="0.8" fill="#fff" stroke="#7c7c7c" stroke-width="1.1"/><rect x="1350.90" y="499.10" width="45.10" height="17.30" rx="0.8" fill="#fff" stroke="#7c7c7c" stroke-width="1.1"/><rect x="1398.20" y="499.10" width="45.10" height="17.30" rx="0.8" fill="#fff" stroke="#7c7c7c" stroke-width="1.1"/><rect x="1303.30" y="519.40" width="45.10" height="17.20" rx="0.8" fill="#fff" stroke="#7c7c7c" stroke-width="1.1"/><rect x="1350.90" y="519.40" width="45.10" height="17.20" rx="0.8" fill="#fff" stroke="#7c7c7c" stroke-width="1.1"/><rect x="1398.20" y="519.40" width="45.10" height="17.20" rx="0.8" fill="#fff" stroke="#7c7c7c" stroke-width="1.1"/><rect x="1303.30" y="539.40" width="45.10" height="17.50" rx="0.8" fill="#fff" stroke="#7c7c7c" stroke-width="1.1"/><rect x="1350.90" y="539.40" width="45.10" height="17.50" rx="0.8" fill="#fff" stroke="#7c7c7c" stroke-width="1.1"/><rect x="1398.20" y="539.40" width="45.10" height="17.50" rx="0.8" fill="#fff" stroke="#7c7c7c" stroke-width="1.1"/></svg><span class="t" style='left:1176.80px;top:56.25px;font-size:9.3px;line-height:12.09px;color:#000;letter-spacing:-0.055px;'>Print settings:</span><span class="t" style='left:1219.20px;top:72.86px;font-size:9.3px;line-height:12.09px;color:#000;letter-spacing:-0.123px;'>0.15mm STRUCTURAL (modified)</span><span class="t" style='left:1176.80px;top:90.75px;font-size:9.3px;line-height:12.09px;color:#000;letter-spacing:-0.215px;'>Filament:</span><div class="b" style="left:1183.1px;top:106.6px;width:17.8px;height:11.8px;background:#ff8000;"></div><span class="t" style='left:1219.20px;top:106.66px;font-size:9.3px;line-height:12.09px;color:#000;letter-spacing:-0.202px;'>Generic PLA</span><span class="t" style='left:1176.80px;top:123.76px;font-size:9.3px;line-height:12.09px;color:#000;letter-spacing:-0.159px;'>Printer:</span><span class="t" style='left:1219.20px;top:140.26px;font-size:9.3px;line-height:12.09px;color:#000;letter-spacing:-0.124px;'>Original Prusa MK4 Input Shaper 0.4 nozzle</span><span class="t" style='left:1176.80px;top:164.56px;font-size:9.3px;line-height:12.09px;color:#000;letter-spacing:-0.166px;'>Supports:</span><span class="t" style='left:1225.50px;top:164.46px;font-size:9.3px;line-height:12.09px;color:#000;letter-spacing:-0.289px;'>Everywhere</span><span class="t" style='left:1176.80px;top:185.26px;font-size:9.3px;line-height:12.09px;color:#000;letter-spacing:0.154px;'>Infill:</span><span class="t" style='left:1206.90px;top:185.26px;font-size:9.3px;line-height:12.09px;color:#000;letter-spacing:-0.536px;'>15%</span><span class="t" style='left:1277.10px;top:185.26px;font-size:9.3px;line-height:12.09px;color:#000;letter-spacing:0.059px;'>Brim:</span><div class="b" style="left:1302.2px;top:186px;width:11.2px;height:10.9px;background:#ed7b2d;border:1px solid #d96a1e;"></div><div class="b" style="left:1176px;top:206.3px;width:330px;height:230.8px;background:#fff;border:1px solid #828282;"></div><div class="b" style="left:1177px;top:224.9px;width:323px;height:17px;background:#cdcdcd;"></div><div class="b" style="left:1333.2px;top:207px;width:1px;height:17.8px;background:#e0e0e0;"></div><div class="b" style="left:1356.6px;top:207px;width:1px;height:17.8px;background:#e0e0e0;"></div><span class="t" style='left:1181.50px;top:209.66px;font-size:9.3px;line-height:12.09px;color:#000;letter-spacing:0.047px;'>Name</span><span class="t" style='left:1413.70px;top:209.66px;font-size:9.3px;line-height:12.09px;color:#000;letter-spacing:0.080px;'>Editing</span><span class="t" style='left:1207.70px;top:227.36px;font-size:9.3px;line-height:12.09px;color:#f2f2f2;letter-spacing:-0.259px;'>egg shaker.STL</span><span class="t" style='left:1214.30px;top:244.56px;font-size:9.3px;line-height:12.09px;color:#000;letter-spacing:0.066px;'>Paint-on supports</span><div class="b" style="left:1176.8px;top:447.3px;width:330px;height:136.9px;border:1px solid #dcdcdc;"></div><div class="b" style="left:1183px;top:441px;width:93px;height:12px;background:#fff;"></div><span class="t" style='left:1185.80px;top:441.95px;font-size:9.3px;line-height:12.09px;color:#000;font-weight:bold;letter-spacing:-0.099px;'>Object manipulation</span><span class="t" style='left:1189.70px;top:461.35px;font-size:9.3px;line-height:12.09px;color:#000;letter-spacing:0.102px;'>World coordinates</span><span class="t" style='left:1314.80px;top:459.87px;font-size:10.2px;line-height:13.26px;color:#000;font-weight:bold;'>X</span><span class="t" style='left:1362.60px;top:459.87px;font-size:10.2px;line-height:13.26px;color:#000;font-weight:bold;'>Y</span><span class="t" style='left:1410.40px;top:459.87px;font-size:10.2px;line-height:13.26px;color:#000;font-weight:bold;'>Z</span><span class="t" style='left:1183.70px;top:480.85px;font-size:9.3px;line-height:12.09px;color:#000;letter-spacing:0.148px;'>Position:</span><span class="t" style='left:1310.10px;top:481.25px;font-size:9.3px;line-height:12.09px;color:#000;letter-spacing:-0.3px;'>125</span><span class="t" style='left:1357.70px;top:481.25px;font-size:9.3px;line-height:12.09px;color:#000;letter-spacing:-0.3px;'>105</span><span class="t" style='left:1405.00px;top:481.25px;font-size:9.3px;line-height:12.09px;color:#000;letter-spacing:-0.3px;'>39</span><span class="t" style='left:1446.40px;top:480.95px;font-size:9.3px;line-height:12.09px;color:#000;letter-spacing:0.600px;'>mm</span><span class="t" style='left:1183.70px;top:501.56px;font-size:9.3px;line-height:12.09px;color:#000;letter-spacing:-0.096px;'>Rotate (relative):</span><span class="t" style='left:1310.10px;top:501.95px;font-size:9.3px;line-height:12.09px;color:#000;letter-spacing:-0.3px;'>0</span><span class="t" style='left:1357.70px;top:501.95px;font-size:9.3px;line-height:12.09px;color:#000;letter-spacing:-0.3px;'>0</span><span class="t" style='left:1405.00px;top:501.95px;font-size:9.3px;line-height:12.09px;color:#000;letter-spacing:-0.3px;'>0</span><span class="t" style='left:1446.30px;top:501.66px;font-size:9.3px;line-height:12.09px;color:#000;'>°</span><span class="t" style='left:1199.20px;top:522.16px;font-size:9.3px;line-height:12.09px;color:#000;letter-spacing:-0.223px;'>Scale factors:</span><span class="t" style='left:1310.10px;top:522.25px;font-size:9.3px;line-height:12.09px;color:#000;letter-spacing:-0.3px;'>100</span><span class="t" style='left:1357.70px;top:522.25px;font-size:9.3px;line-height:12.09px;color:#000;letter-spacing:-0.3px;'>100</span><span class="t" style='left:1405.00px;top:522.25px;font-size:9.3px;line-height:12.09px;color:#000;letter-spacing:-0.3px;'>100</span><span class="t" style='left:1446.40px;top:521.96px;font-size:9.3px;line-height:12.09px;color:#000;letter-spacing:-0.881px;'>%</span><span class="t" style='left:1199.20px;top:542.16px;font-size:9.3px;line-height:12.09px;color:#000;letter-spacing:-0.079px;'>Size [World]:</span><span class="t" style='left:1310.10px;top:542.25px;font-size:9.3px;line-height:12.09px;color:#000;letter-spacing:-0.3px;'>49.97</span><span class="t" style='left:1357.70px;top:542.25px;font-size:9.3px;line-height:12.09px;color:#000;letter-spacing:-0.3px;'>49.99</span><span class="t" style='left:1405.00px;top:542.25px;font-size:9.3px;line-height:12.09px;color:#000;letter-spacing:-0.3px;'>78</span><span class="t" style='left:1446.40px;top:541.96px;font-size:9.3px;line-height:12.09px;color:#000;letter-spacing:0.600px;'>mm</span><div class="b" style="left:1186.9px;top:564px;width:11.1px;height:10.8px;background:#fff;border:1px solid #555;border-radius:1px;"></div><span class="t" style='left:1202.20px;top:563.46px;font-size:9.3px;line-height:12.09px;color:#000;letter-spacing:-0.151px;'>Inches</span><div class="b" style="left:1176.8px;top:595.3px;width:330px;height:54px;border:1px solid #dcdcdc;"></div><div class="b" style="left:1181px;top:589px;width:23px;height:12px;background:#fff;"></div><span class="t" style='left:1183.70px;top:589.25px;font-size:9.3px;line-height:12.09px;color:#000;font-weight:bold;letter-spacing:0.138px;'>Info</span><span class="t" style='left:1180.40px;top:602.75px;font-size:9.3px;line-height:12.09px;color:#000;letter-spacing:-0.694px;'>Size:</span><span class="t" style='left:1220.00px;top:602.75px;font-size:9.3px;line-height:12.09px;color:#000;letter-spacing:-0.402px;'>49.97 x 49.99 x 78.00</span><span class="t" style='left:1312.60px;top:602.75px;font-size:9.3px;line-height:12.09px;color:#000;letter-spacing:-0.013px;'>Volume:</span><span class="t" style='left:1358.50px;top:602.75px;font-size:9.3px;line-height:12.09px;color:#000;letter-spacing:-0.410px;'>31621.08</span><span class="t" style='left:1180.40px;top:618.96px;font-size:9.3px;line-height:12.09px;color:#000;letter-spacing:-0.355px;'>Facets:</span><span class="t" style='left:1220.00px;top:618.96px;font-size:9.3px;line-height:12.09px;color:#000;letter-spacing:-0.239px;'>9280 (2 shells)</span><span class="t" style='left:1196.00px;top:634.75px;font-size:9.3px;line-height:12.09px;color:#000;letter-spacing:-0.042px;'>Auto-repaired 132 errors</span><div class="b" style="left:1176.8px;top:661px;width:330px;height:111.3px;border:1px solid #dcdcdc;"></div><div class="b" style="left:1181px;top:655px;width:52px;height:12px;background:#fff;"></div><span class="t" style='left:1183.70px;top:654.96px;font-size:9.3px;line-height:12.09px;color:#000;font-weight:bold;letter-spacing:-0.092px;'>Sliced Info</span><span class="t" style='left:1180.40px;top:668.16px;font-size:9.3px;line-height:12.09px;color:#000;letter-spacing:-0.111px;'>Used Filament (g)</span><span class="t" style='left:1291.30px;top:668.16px;font-size:9.3px;line-height:12.09px;color:#000;letter-spacing:-0.3px;'>29.08</span><span class="t" style='left:1180.40px;top:684.36px;font-size:9.3px;line-height:12.09px;color:#000;letter-spacing:-0.057px;'>Used Filament (m)</span><span class="t" style='left:1291.30px;top:684.36px;font-size:9.3px;line-height:12.09px;color:#000;letter-spacing:-0.3px;'>9.75</span><span class="t" style='left:1180.40px;top:700.75px;font-size:9.3px;line-height:12.09px;color:#000;letter-spacing:-0.016px;'>Used Filament (mm³)</span><span class="t" style='left:1291.30px;top:700.75px;font-size:9.3px;line-height:12.09px;color:#000;letter-spacing:-0.3px;'>23453.32</span><span class="t" style='left:1180.40px;top:717.36px;font-size:9.3px;line-height:12.09px;color:#000;letter-spacing:-0.206px;'>Cost</span><span class="t" style='left:1291.30px;top:717.36px;font-size:9.3px;line-height:12.09px;color:#000;letter-spacing:-0.3px;'>0.74</span><span class="t" style='left:1180.40px;top:734.06px;font-size:9.3px;line-height:12.09px;color:#000;letter-spacing:0.077px;'>Estimated printing time:</span><span class="t" style='left:1187.80px;top:745.56px;font-size:9.3px;line-height:12.09px;color:#000;letter-spacing:0.197px;'>- normal mode</span><span class="t" style='left:1291.30px;top:745.56px;font-size:9.3px;line-height:12.09px;color:#000;letter-spacing:-0.016px;'>2h4m</span><span class="t" style='left:1187.80px;top:757.56px;font-size:9.3px;line-height:12.09px;color:#000;letter-spacing:0.077px;'>- stealth mode</span><span class="t" style='left:1291.30px;top:757.56px;font-size:9.3px;line-height:12.09px;color:#000;letter-spacing:0.050px;'>2h11m</span><div class="b" style="left:1176px;top:777.6px;width:296px;height:24.7px;background:#e1e1e1;"></div><div class="b" style="left:1476px;top:777.6px;width:24px;height:24.7px;background:#e1e1e1;"></div><span class="t" style='left:1291.85px;top:783.75px;font-size:9.3px;line-height:12.09px;color:#000;font-weight:bold;letter-spacing:-0.043px;'>Export G-code</span><svg width="1500" height="805" viewBox="0 0 1500 805"><path d="M1206.6,78.80000000000001 V76.60000000000001 Q1206.6,74.20000000000002 1209.3,74.20000000000002 Q1212.0,74.20000000000002 1212.0,76.60000000000001 V78.80000000000001" fill="none" stroke="#828282" stroke-width="1.5"/><rect x="1204.6" y="78.60000000000001" width="9.4" height="5.6" rx="0.6" fill="#828282"/><path d="M1207.7,80.80000000000001 H1210.8999999999999 V82.4 H1207.7 Z" fill="#fff"/><path d="M1469.7,77.2 L1474,80.3 L1478.3,77.2" fill="none" stroke="#444" stroke-width="1"/><rect x="1490.9" y="72.60000000000001" width="2.6" height="2.4" rx="0.7" fill="#8c8c8c" transform="rotate(0 1492.2 78.10000000000001)"/><rect x="1490.9" y="72.60000000000001" width="2.6" height="2.4" rx="0.7" fill="#8c8c8c" transform="rotate(45 1492.2 78.10000000000001)"/><rect x="1490.9" y="72.60000000000001" width="2.6" height="2.4" rx="0.7" fill="#8c8c8c" transform="rotate(90 1492.2 78.10000000000001)"/><rect x="1490.9" y="72.60000000000001" width="2.6" height="2.4" rx="0.7" fill="#8c8c8c" transform="rotate(135 1492.2 78.10000000000001)"/><rect x="1490.9" y="72.60000000000001" width="2.6" height="2.4" rx="0.7" fill="#8c8c8c" transform="rotate(180 1492.2 78.10000000000001)"/><rect x="1490.9" y="72.60000000000001" width="2.6" height="2.4" rx="0.7" fill="#8c8c8c" transform="rotate(225 1492.2 78.10000000000001)"/><rect x="1490.9" y="72.60000000000001" width="2.6" height="2.4" rx="0.7" fill="#8c8c8c" transform="rotate(270 1492.2 78.10000000000001)"/><rect x="1490.9" y="72.60000000000001" width="2.6" height="2.4" rx="0.7" fill="#8c8c8c" transform="rotate(315 1492.2 78.10000000000001)"/><circle cx="1492.2" cy="78.10000000000001" r="4.3999999999999995" fill="#fff" stroke="#8c8c8c" stroke-width="1"/><circle cx="1492.2" cy="78.10000000000001" r="2.5" fill="#fff" stroke="#f0905c" stroke-width="1.2"/><path d="M1206.6,112.60000000000001 V110.4 Q1206.6,108.00000000000001 1209.3,108.00000000000001 Q1212.0,108.00000000000001 1212.0,110.4 V112.60000000000001" fill="none" stroke="#828282" stroke-width="1.5"/><rect x="1204.6" y="112.4" width="9.4" height="5.6" rx="0.6" fill="#828282"/><path d="M1207.7,114.60000000000001 H1210.8999999999999 V116.2 H1207.7 Z" fill="#fff"/><path d="M1469.7,111.0 L1474,114.1 L1478.3,111.0" fill="none" stroke="#444" stroke-width="1"/><rect x="1490.9" y="106.4" width="2.6" height="2.4" rx="0.7" fill="#8c8c8c" transform="rotate(0 1492.2 111.9)"/><rect x="1490.9" y="106.4" width="2.6" height="2.4" rx="0.7" fill="#8c8c8c" transform="rotate(45 1492.2 111.9)"/><rect x="1490.9" y="106.4" width="2.6" height="2.4" rx="0.7" fill="#8c8c8c" transform="rotate(90 1492.2 111.9)"/><rect x="1490.9" y="106.4" width="2.6" height="2.4" rx="0.7" fill="#8c8c8c" transform="rotate(135 1492.2 111.9)"/><rect x="1490.9" y="106.4" width="2.6" height="2.4" rx="0.7" fill="#8c8c8c" transform="rotate(180 1492.2 111.9)"/><rect x="1490.9" y="106.4" width="2.6" height="2.4" rx="0.7" fill="#8c8c8c" transform="rotate(225 1492.2 111.9)"/><rect x="1490.9" y="106.4" width="2.6" height="2.4" rx="0.7" fill="#8c8c8c" transform="rotate(270 1492.2 111.9)"/><rect x="1490.9" y="106.4" width="2.6" height="2.4" rx="0.7" fill="#8c8c8c" transform="rotate(315 1492.2 111.9)"/><circle cx="1492.2" cy="111.9" r="4.3999999999999995" fill="#fff" stroke="#8c8c8c" stroke-width="1"/><circle cx="1492.2" cy="111.9" r="2.5" fill="#fff" stroke="#f0905c" stroke-width="1.2"/><path d="M1206.6,146.1 V143.9 Q1206.6,141.5 1209.3,141.5 Q1212.0,141.5 1212.0,143.9 V146.1" fill="none" stroke="#828282" stroke-width="1.5"/><rect x="1204.6" y="145.9" width="9.4" height="5.6" rx="0.6" fill="#828282"/><path d="M1207.7,148.1 H1210.8999999999999 V149.7 H1207.7 Z" fill="#fff"/><path d="M1469.7,144.5 L1474,147.6 L1478.3,144.5" fill="none" stroke="#444" stroke-width="1"/><rect x="1490.9" y="139.89999999999998" width="2.6" height="2.4" rx="0.7" fill="#8c8c8c" transform="rotate(0 1492.2 145.39999999999998)"/><rect x="1490.9" y="139.89999999999998" width="2.6" height="2.4" rx="0.7" fill="#8c8c8c" transform="rotate(45 1492.2 145.39999999999998)"/><rect x="1490.9" y="139.89999999999998" width="2.6" height="2.4" rx="0.7" fill="#8c8c8c" transform="rotate(90 1492.2 145.39999999999998)"/><rect x="1490.9" y="139.89999999999998" width="2.6" height="2.4" rx="0.7" fill="#8c8c8c" transform="rotate(135 1492.2 145.39999999999998)"/><rect x="1490.9" y="139.89999999999998" width="2.6" height="2.4" rx="0.7" fill="#8c8c8c" transform="rotate(180 1492.2 145.39999999999998)"/><rect x="1490.9" y="139.89999999999998" width="2.6" height="2.4" rx="0.7" fill="#8c8c8c" transform="rotate(225 1492.2 145.39999999999998)"/><rect x="1490.9" y="139.89999999999998" width="2.6" height="2.4" rx="0.7" fill="#8c8c8c" transform="rotate(270 1492.2 145.39999999999998)"/><rect x="1490.9" y="139.89999999999998" width="2.6" height="2.4" rx="0.7" fill="#8c8c8c" transform="rotate(315 1492.2 145.39999999999998)"/><circle cx="1492.2" cy="145.39999999999998" r="4.3999999999999995" fill="#fff" stroke="#8c8c8c" stroke-width="1"/><circle cx="1492.2" cy="145.39999999999998" r="2.5" fill="#fff" stroke="#f0905c" stroke-width="1.2"/><rect x="1190.7" y="73.1" width="2.6" height="2.4" rx="0.7" fill="#8c8c8c" transform="rotate(0 1192 78.7)"/><rect x="1190.7" y="73.1" width="2.6" height="2.4" rx="0.7" fill="#8c8c8c" transform="rotate(45 1192 78.7)"/><rect x="1190.7" y="73.1" width="2.6" height="2.4" rx="0.7" fill="#8c8c8c" transform="rotate(90 1192 78.7)"/><rect x="1190.7" y="73.1" width="2.6" height="2.4" rx="0.7" fill="#8c8c8c" transform="rotate(135 1192 78.7)"/><rect x="1190.7" y="73.1" width="2.6" height="2.4" rx="0.7" fill="#8c8c8c" transform="rotate(180 1192 78.7)"/><rect x="1190.7" y="73.1" width="2.6" height="2.4" rx="0.7" fill="#8c8c8c" transform="rotate(225 1192 78.7)"/><rect x="1190.7" y="73.1" width="2.6" height="2.4" rx="0.7" fill="#8c8c8c" transform="rotate(270 1192 78.7)"/><rect x="1190.7" y="73.1" width="2.6" height="2.4" rx="0.7" fill="#8c8c8c" transform="rotate(315 1192 78.7)"/><circle cx="1192" cy="78.7" r="4.5" fill="#fff" stroke="#8c8c8c" stroke-width="1"/><circle cx="1192" cy="78.7" r="2.5" fill="#fff" stroke="#f0905c" stroke-width="1.2"/><path d="M1469.7,168.7 L1474,171.79999999999998 L1478.3,168.7" fill="none" stroke="#444" stroke-width="1"/><path d="M1249.1000000000001,189.9 L1253.4,193.0 L1257.7,189.9" fill="none" stroke="#444" stroke-width="1"/><path d="M1287.0,465.8 L1291.3,468.90000000000003 L1295.6,465.8" fill="none" stroke="#444" stroke-width="1"/><rect x="1186.6" y="141" width="10.4" height="9.8" rx="0.8" fill="#fff" stroke="#8a8a8a" stroke-width="0.9"/><path d="M1186.6,150.6 H1197" stroke="#777" stroke-width="1.2"/><path d="M1190.6,144.8 H1197" stroke="#8a8a8a" stroke-width="0.8"/><circle cx="1189.7" cy="144.6" r="1.5" fill="#ee6b20"/><path d="M1304.6,190.4 L1307.4,193.6 L1311.2,188.8" fill="none" stroke="#fff" stroke-width="1.2"/><path d="M1179.9,231.6 L1183.2,234.9 L1186.5,231.6" fill="none" stroke="#111" stroke-width="1.7"/><path d="M1198.3,229.4 L1203.8999999999999,239.2 H1192.7 Z" fill="none" stroke="#6a6a6a" stroke-width="0.9" stroke-linejoin="round"/><path d="M1198.3,233.0 V235.79999999999998 M1198.3,236.79999999999998 V237.89999999999998" stroke="#6a6a6a" stroke-width="1"/><path d="M1188.1,636.4 L1193.6999999999998,646.3 H1182.5 Z" fill="none" stroke="#b4b4b4" stroke-width="1.0" stroke-linejoin="round"/><path d="M1188.1,640.0 V642.9 M1188.1,643.9 V645.0" stroke="#b4b4b4" stroke-width="1"/><path d="M1340,233.8 Q1345.2,228.4 1350.4,233.8 Q1345.2,239.2 1340,233.8 Z" fill="none" stroke="#787878" stroke-width="1.2"/><circle cx="1345.2" cy="233.8" r="1.3" fill="#787878"/><path d="M1427.2,231.3 H1424 Q1422.9,231.3 1422.9,232.4 V237.5 Q1422.9,238.6 1424,238.6 H1429.4 Q1430.5,238.6 1430.5,237.5 V235" fill="none" stroke="#808080" stroke-width="1"/><circle cx="1430.2" cy="231.9" r="2" fill="#f4f4f4" stroke="#ee7a36" stroke-width="1.2"/><path d="M1199.6,245.6 Q1201.2,248 1203,248.8 M1209.4,245.6 Q1207.6,248 1205.8,248.8" fill="none" stroke="#b8b8b8" stroke-width="0.7"/><path d="M1202,248.6 H1206.8 L1206.6,253.2 L1204.4,256.6 L1202.2,253.2 Z" fill="#f5a27a"/><path d="M1203.4,252.6 L1204.4,254.2 L1205.4,252.6" fill="none" stroke="#fff" stroke-width="0.6"/><g fill="none" stroke="#111" stroke-width="1.8"><path d="M1328.9,462.4 H1326.8 Q1325.6000000000001,462.4 1325.6000000000001,463.6 V469.4 Q1325.6000000000001,470.6 1326.8,470.6 H1328.9"/><path d="M1331.5,462.4 H1333.6000000000001 Q1334.8,462.4 1334.8,463.6 V469.4 Q1334.8,470.6 1333.6000000000001,470.6 H1331.5"/></g><path d="M1330.2,461.6 V463.3 M1330.2,465.3 V467.7 M1330.2,469.7 V471.4" stroke="#444" stroke-width="0.7"/><g fill="none" stroke="#111" stroke-width="1.8"><path d="M1376.2,462.4 H1374.1 Q1372.9,462.4 1372.9,463.6 V469.4 Q1372.9,470.6 1374.1,470.6 H1376.2"/><path d="M1378.8,462.4 H1380.9 Q1382.1,462.4 1382.1,463.6 V469.4 Q1382.1,470.6 1380.9,470.6 H1378.8"/></g><path d="M1377.5,461.6 V463.3 M1377.5,465.3 V467.7 M1377.5,469.7 V471.4" stroke="#444" stroke-width="0.7"/><g fill="none" stroke="#111" stroke-width="1.8"><path d="M1423.8,462.4 H1421.6999999999998 Q1420.5,462.4 1420.5,463.6 V469.4 Q1420.5,470.6 1421.6999999999998,470.6 H1423.8"/><path d="M1426.3999999999999,462.4 H1428.5 Q1429.6999999999998,462.4 1429.6999999999998,463.6 V469.4 Q1429.6999999999998,470.6 1428.5,470.6 H1426.3999999999999"/></g><path d="M1425.1,461.6 V463.3 M1425.1,465.3 V467.7 M1425.1,469.7 V471.4" stroke="#444" stroke-width="0.7"/><path d="M1186.8999999999999,538.4 V536.1999999999999 Q1186.8999999999999,533.8 1189.6,533.8 Q1192.3,533.8 1192.3,536.1999999999999 V538.4" fill="none" stroke="#828282" stroke-width="1.5"/><rect x="1184.8999999999999" y="538.1999999999999" width="9.4" height="5.6" rx="0.6" fill="#828282"/><path d="M1188.0,540.4 H1191.1999999999998 V542.0 H1188.0 Z" fill="#fff"/><path d="M1471.6,503.2 A4.1,4.1 0 1 1 1468.5,509.6" fill="none" stroke="#e8702a" stroke-width="1.5"/><path d="M1472.6,500.8 L1469,503.6 L1472.9,505.6 Z" fill="#e8702a"/><rect x="1486.2" y="779.7" width="9.9" height="15.6" rx="2" fill="#ee6b20"/><rect x="1488.4" y="796.6" width="6" height="4" rx="0.8" fill="#8a8a8a"/><path d="M1489.8,798.4 H1491 M1492,798.4 H1493.2" stroke="#eee" stroke-width="0.9"/><rect x="1480" y="784.9" width="9.9" height="12.6" rx="1.3" fill="#808080" stroke="#e3e3e3" stroke-width="0.8"/><rect x="1481.8" y="793.9" width="6.3" height="2" rx="0.4" fill="#f0f0f0"/></svg></div>
</body></html>
